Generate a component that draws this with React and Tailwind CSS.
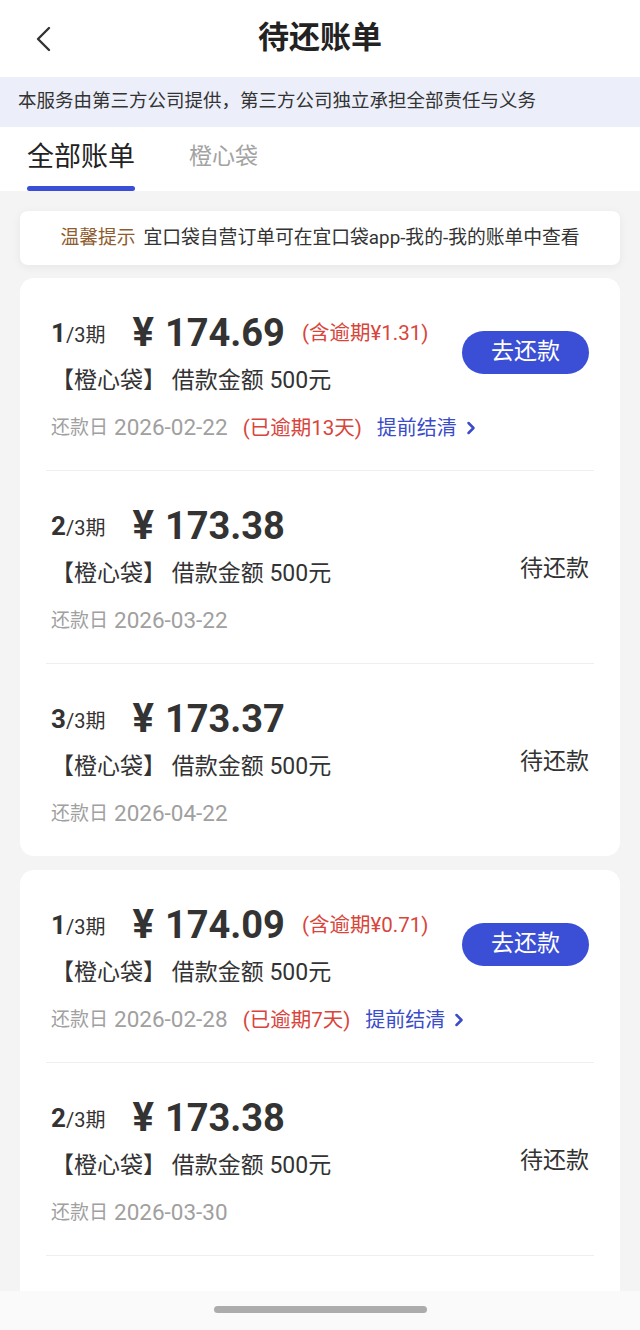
import { ChevronRight } from "lucide-react";

const groups = [
  [
    { p: 1, amt: "174.69", late: "1.31", date: "2026-02-22", days: 13 },
    { p: 2, amt: "173.38", date: "2026-03-22" },
    { p: 3, amt: "173.37", date: "2026-04-22" },
  ],
  [
    { p: 1, amt: "174.09", late: "0.71", date: "2026-02-28", days: 7 },
    { p: 2, amt: "173.38", date: "2026-03-30" },
    { p: 3, amt: "173.37", date: "2026-04-30" },
  ],
];

function BillItem({ bill }) {
  const overdue = !!bill.late;
  return (
    <div className="mx-[26px] border-b border-[#efefef] last:border-b-0 pt-[33px] pb-[26px] px-[5px] flex items-center">
      <div className="flex-1 min-w-0 flex flex-col whitespace-nowrap">
        {/* amount row */}
        <div className="h-[44px] flex items-center">
          <span className="text-[#333] leading-none">
            <span className="text-[26px] font-bold">{bill.p}</span>
            <span className="text-[20px]">/3期</span>
          </span>
          <span className="ml-[27px] text-[#333] font-bold text-[38px] leading-none flex items-center">
            <span className="text-[40px] mr-[11px]">¥</span>
            {bill.amt}
          </span>
          {overdue && (
            <span className="ml-[17px] text-[20.5px] text-[#d8453c] leading-none">(含逾期¥{bill.late})</span>
          )}
        </div>
        <div className="h-[32px] mt-[10px] flex items-center text-[23px] text-[#333]">【橙心袋】 借款金额 500元</div>
        <div className="h-[32px] mt-[15px] flex items-center text-[#a0a0a0]">
          <span className="text-[19px]">还款日</span>
          <span className="text-[22.5px] ml-[6px]">{bill.date}</span>
          {overdue && (
            <>
              <span className="ml-[15px] text-[20.5px] text-[#d8453c]">(已逾期{bill.days}天)</span>
              <span className="ml-[15px] text-[20px] text-[#3a4cc9] flex items-center">
                提前结清
                <ChevronRight className="ml-[4px]" size={20} strokeWidth={3} />
              </span>
            </>
          )}
        </div>
      </div>
      {overdue ? (
        <button className="shrink-0 self-start mt-[20px] w-[127px] h-[43px] rounded-full bg-[#3a4fd6] text-white text-[23px]">去还款</button>
      ) : (
        <span className="shrink-0 mb-[3px] text-[23px] text-[#333]">待还款</span>
      )}
    </div>
  );
}

export default function App() {
  return (
    <div className="relative w-[640px] h-[1330px] overflow-hidden bg-[#f4f4f4] font-['Roboto','Noto_Sans_CJK_SC',sans-serif]">
      {/* header */}
      <div className="h-[77px] bg-white grid grid-cols-[1fr_auto_1fr] items-center">
        <div className="pl-[35px]">
          <svg width="16" height="26" viewBox="0 0 16 26">
            <path d="M14 2 L3 13 L14 24" fill="none" stroke="#333" strokeWidth="2.4" strokeLinecap="round" strokeLinejoin="round" />
          </svg>
        </div>
        <h1 className="text-[31px] font-bold text-[#222]">待还账单</h1>
        <div></div>
      </div>

      {/* notice */}
      <div className="h-[50px] bg-[#eceffa] px-[18px] flex items-center text-[18.5px] text-[#333] whitespace-nowrap">
        本服务由第三方公司提供，第三方公司独立承担全部责任与义务
      </div>

      {/* tabs */}
      <div className="h-[64px] bg-white flex items-start px-[27px] pt-[17px]">
        <div className="flex flex-col">
          <span className="text-[27px] leading-[26px] text-[#222]">全部账单</span>
          <span className="mt-[16px] h-[5px] rounded-full bg-[#3a4fd6]"></span>
        </div>
        <span className="ml-[54px] text-[23px] leading-[26px] text-[#a3a3a3]">橙心袋</span>
      </div>

      {/* tip */}
      <div className="mx-[20px] mt-[20px] h-[54px] bg-white rounded-[8px] shadow-[0_2px_10px_rgba(0,0,0,0.06)] flex items-center justify-center text-[18.8px] text-[#333] whitespace-nowrap">
        <span className="text-[#8e5c2e] mr-[8px]">温馨提示</span>
        宜口袋自营订单可在宜口袋app-我的-我的账单中查看
      </div>

      {groups.map((g, i) => (
        <div key={i} className={`mx-[20px] bg-white rounded-[14px] ${i === 0 ? "mt-[13px]" : "mt-[14px]"}`}>
          {g.map((b) => (
            <BillItem key={b.p} bill={b} />
          ))}
        </div>
      ))}

      {/* home indicator bar */}
      <div className="absolute bottom-0 left-0 right-0 h-[39px] bg-[#fafafa] flex justify-center">
        <div className="mt-[15px] w-[213px] h-[7px] rounded-full bg-[#acacac]"></div>
      </div>
    </div>
  );
}
